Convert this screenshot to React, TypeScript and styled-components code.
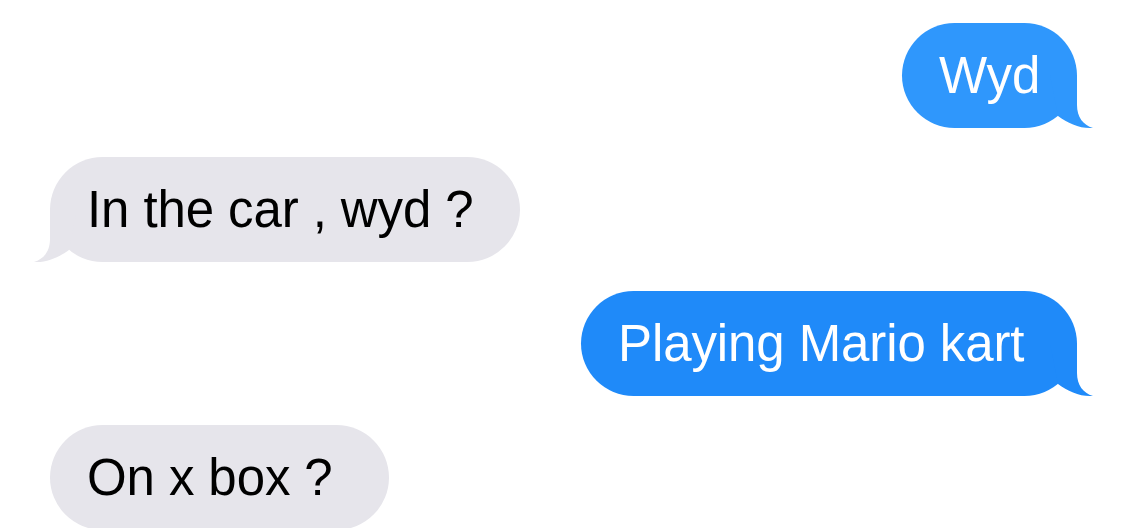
import React from "react";
import styled, { createGlobalStyle } from "styled-components";

const Global = createGlobalStyle`
  html, body { margin: 0; padding: 0; background: #ffffff; }
  body { font-family: "Liberation Sans", Arial, sans-serif; }
`;

const Thread = styled.div`
  display: flex;
  flex-direction: column;
  gap: 29px;
  padding: 23px 48px 0 50px;
  height: 528px;
  box-sizing: border-box;
  overflow: hidden;
`;

const Bubble = styled.div<{ $out: boolean; $bg: string; $width: number }>`
  position: relative;
  align-self: ${(p) => (p.$out ? "flex-end" : "flex-start")};
  box-sizing: border-box;
  width: ${(p) => p.$width}px;
  height: 105px;
  flex: none;
  display: flex;
  align-items: center;
  padding-left: 37px;
  padding-bottom: 1px;
  border-radius: 52.5px;
  background: ${(p) => p.$bg};
  color: ${(p) => (p.$out ? "#ffffff" : "#000000")};
  font-size: 51px;
  letter-spacing: -0.1px;
  white-space: nowrap;
`;

const Tail = styled.svg<{ $out: boolean }>`
  position: absolute;
  bottom: 0;
  width: 45px;
  height: 53px;
  overflow: visible;
  ${(p) =>
    p.$out
      ? "right: -18px;"
      : "left: -18px; transform: scaleX(-1);"}
`;

type Msg = { text: string; out: boolean; bg: string; width: number; tail: boolean };

const messages: Msg[] = [
  { text: "Wyd", out: true, bg: "#2f97fc", width: 175, tail: true },
  { text: "In the car , wyd ?", out: false, bg: "#e6e5eb", width: 470, tail: true },
  { text: "Playing Mario kart", out: true, bg: "#1f8af9", width: 496, tail: true },
  { text: "On x box ?", out: false, bg: "#e6e5eb", width: 339, tail: false },
];

export default function App() {
  return (
    <>
      <Global />
      <Thread>
        {messages.map((m, i) => (
          <Bubble key={i} $out={m.out} $bg={m.bg} $width={m.width}>
            {m.text}
            {m.tail && (
              <Tail $out={m.out} viewBox="0 0 45 53">
                <path
                  d="M27 0 L27 30 C27 42 33 50 43 53 C30 54 18 48 8 41 L0 0 Z"
                  fill={m.bg}
                />
              </Tail>
            )}
          </Bubble>
        ))}
      </Thread>
    </>
  );
}
